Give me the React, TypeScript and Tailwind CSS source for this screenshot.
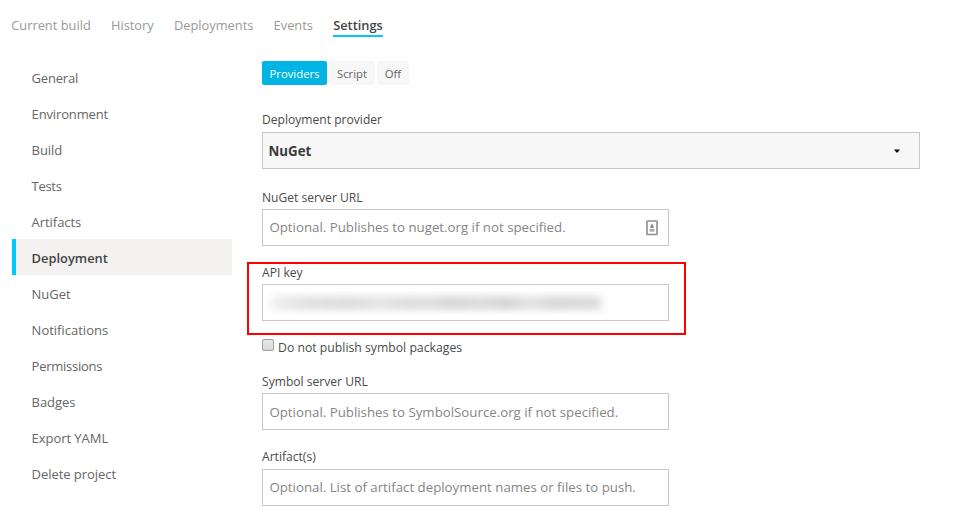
import type { ReactNode } from "react";

const tabs = ["Current build", "History", "Deployments", "Events"];

const sections: { name: string; tracking: string }[] = [
  { name: "General", tracking: "tracking-[-0.2px]" },
  { name: "Environment", tracking: "tracking-[-0.14px]" },
  { name: "Build", tracking: "tracking-[-0.1px]" },
  { name: "Tests", tracking: "tracking-[-0.3px]" },
  { name: "Artifacts", tracking: "tracking-[-0.05px]" },
  { name: "Deployment", tracking: "tracking-normal" },
  { name: "NuGet", tracking: "tracking-[-0.05px]" },
  { name: "Notifications", tracking: "tracking-normal" },
  { name: "Permissions", tracking: "tracking-[-0.25px]" },
  { name: "Badges", tracking: "tracking-[-0.05px]" },
  { name: "Export YAML", tracking: "tracking-[-0.05px]" },
  { name: "Delete project", tracking: "tracking-[-0.05px]" },
];

function TextInput({ placeholder, label, raised, children }: { placeholder?: string; label: string; raised?: boolean; children?: ReactNode }) {
  return (
    <div className="relative flex h-[37px] w-[407px] items-center border border-[#c8c8c8] bg-white">
      <input
        type="text"
        aria-label={label}
        placeholder={placeholder}
        className={`h-full w-full bg-transparent pl-[6.4px] text-[13.28px] text-[#444] outline-none placeholder:text-[#858585] ${raised ? "pb-[2px]" : ""}`}
      />
      {children}
    </div>
  );
}

function Label({ raised, children }: { raised?: boolean; children: ReactNode }) {
  return <div className={`h-5 text-[12.1px] text-[#4a4a4a] ${raised ? "leading-4" : "leading-[18px]"}`}>{children}</div>;
}

function AutofillIcon() {
  return (
    <svg className="absolute top-[10px] right-[10px]" width="12" height="16" viewBox="0 0 12 16">
      <rect x="1" y="1" width="10" height="13.5" rx="0.6" fill="#fff" stroke="#8c8c8c" strokeWidth="1.6" />
      <path d="M6 3.2 7.6 6.2V8H4.4V6.2Z" fill="#8c8c8c" />
      <path d="M3.5 8.8H8.5V11.6H3.5Z" fill="#aaa" />
    </svg>
  );
}

export default function App() {
  return (
    <div className="h-[508px] w-[968px] overflow-hidden bg-white font-['Open_Sans','Noto_Sans',sans-serif]">
      <nav className="flex h-[37px] items-end gap-[20.2px] pl-[11.2px] text-[12.85px] leading-5 text-[#999]">
        {tabs.map((t) => (
          <a key={t} className="border-b-2 border-transparent">{t}</a>
        ))}
        <a className="border-b-2 border-[#00c8f0] font-semibold text-[#444]">Settings</a>
      </nav>

      <div className="flex">
        <aside className="mt-[22px] ml-3 w-[220px]">
          {sections.map(({ name, tracking }) => (
            <div
              key={name}
              className={
                name === "Deployment"
                  ? "h-9 border-l-4 border-[#00c8f8] bg-[#f3f2f1] pl-[15.6px] text-[12.9px] leading-[38px] font-semibold text-[#444]"
                  : `h-9 pl-[19.6px] text-[13px] leading-[38px] text-[#666] ${tracking}`
              }
            >
              {name}
            </div>
          ))}
        </aside>

        <main className="ml-[30px] w-[658px] pt-6">
          <div className="flex h-6 gap-[2px] text-center text-[11.3px] leading-6 text-[#666]">
            <button className="w-[65px] rounded-[2px] bg-[#00b4e4] pt-[2px] leading-[22px] text-white">Providers</button>
            <button className="w-[46px] rounded-[2px] bg-[#f7f7f7] pt-[2px] leading-[22px]">Script</button>
            <button className="w-8 rounded-[2px] bg-[#f7f7f7] pt-[2px] leading-[22px]">Off</button>
          </div>

          <div className="mt-[27px]">
            <Label raised>Deployment provider</Label>
            <div className="flex h-[37px] items-center justify-between border border-[#c8c8c8] bg-[#f7f7f7] pr-[19px] pl-[5.5px]">
              <span className="pt-[2px] text-[13.3px] font-bold text-[#3a3a3a]">NuGet</span>
              <svg width="6" height="4" viewBox="0 0 6 4">
                <path d="M0 0.5H6L3.6 3.5H2.4Z" fill="#111" />
              </svg>
            </div>
          </div>

          <div className="mt-5">
            <Label>NuGet server URL</Label>
            <TextInput raised label="NuGet server URL" placeholder="Optional. Publishes to nuget.org if not specified.">
              <AutofillIcon />
            </TextInput>
          </div>

          <div className="-ml-[15px] mt-4 h-[73px] w-[439px] border-2 border-[#ff0000] pl-[13px]">
            <Label>API key</Label>
            <TextInput label="API key">
              <div className="absolute top-[6px] left-[3px] h-[23px] w-[350px] overflow-hidden">
                <div className="mt-[6px] ml-[5px] h-[12px] w-[330px] bg-[linear-gradient(90deg,#ececec_0%,#dcdcdc_10%,#d6d6d6_24%,#e0e0e0_33%,#d6d6d6_42%,#dadada_48%,#cfcfcf_54%,#d6d6d6_64%,#cccccc_72%,#e0e0e0_78%,#d0d0d0_86%,#d6d6d6_100%)] blur-[5px]" />
              </div>
            </TextInput>
          </div>

          <div className="mt-1 flex h-4">
            <span className="h-3 w-3 rounded-[2px] border border-[#a0a0a0] bg-linear-to-b from-[#e8e8e8] to-[#d8d8d8]" />
            <span className="ml-1 text-[12.24px] leading-[18px] text-[#4a4a4a]">Do not publish symbol packages</span>
          </div>

          <div className="mt-[18px]">
            <Label>Symbol server URL</Label>
            <TextInput label="Symbol server URL" placeholder="Optional. Publishes to SymbolSource.org if not specified." />
          </div>

          <div className="mt-[19px]">
            <Label raised>Artifact(s)</Label>
            <TextInput raised label="Artifact(s)" placeholder="Optional. List of artifact deployment names or files to push." />
          </div>
        </main>
      </div>
    </div>
  );
}
